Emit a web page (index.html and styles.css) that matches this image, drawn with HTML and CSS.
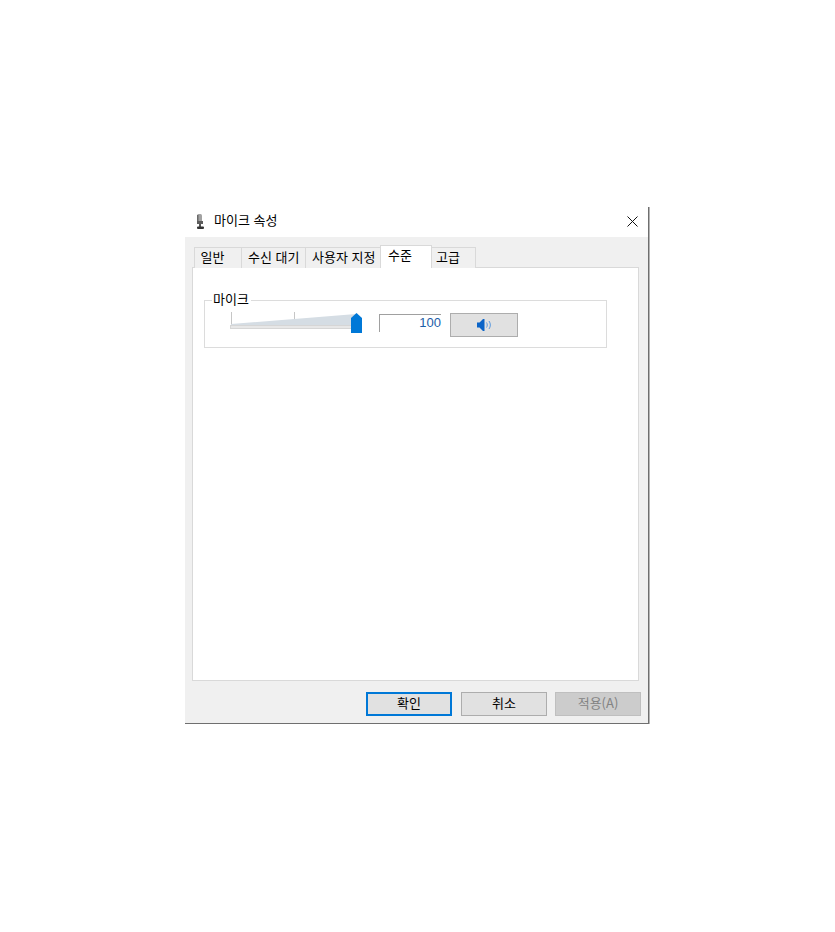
FILE: index.html
```html
<!DOCTYPE html>
<html lang="ko">
<head>
<meta charset="utf-8">
<title>마이크 속성</title>
<link rel="stylesheet" href="styles.css">
</head>
<body>
<div class="dialog">
  <div class="titlebar">
    <svg class="app-icon" width="12" height="16" viewBox="0 0 12 16">
      <rect x="3" y="0" width="5" height="9" rx="1.500" fill="#a2a2a2"/>
      <rect x="3" y="1" width="1.500" height="8" fill="#6a6a6a"/>
      <rect x="3" y="7" width="6" height="3" fill="#5c5c5c"/>
      <rect x="5" y="10" width="2" height="3" fill="#555"/>
      <rect x="3" y="12.500" width="7" height="2.500" rx="1" fill="#333"/>
    </svg>
    <span class="title">마이크 속성</span>
    <svg class="close" width="11" height="11" viewBox="0 0 11 11"><path d="M.5.5l10 10M10.500.5l-10 10" stroke="#111" stroke-width="1" fill="none"/></svg>
  </div>
  <div class="body">
    <div class="tabs">
      <div class="tab tab-general">일반</div>
      <div class="tab tab-listen">수신 대기</div>
      <div class="tab tab-custom">사용자 지정</div>
      <div class="tab tab-active">수준</div>
      <div class="tab tab-advanced">고급</div>
    </div>
    <div class="panel">
      <div class="group">
        <span class="legend">마이크</span>
        <div class="slider">
          <svg class="slider-art" width="132" height="22" viewBox="0 0 132 22">
            <path d="M1.500 0v12M64.500 0v12" stroke="#c6c6c6" fill="none"/>
            <path d="M1 12L126 2v11H1z" fill="#d5dde4"/>
            <rect x="0.500" y="13.500" width="126" height="3" fill="#e7e7e7" stroke="#d6d6d6"/>
            <path d="M126.500 1l5.500 5v15h-11V6z" fill="#0078d7"/>
          </svg>
        </div>
        <div class="value">100</div>
        <div class="speaker">
          <svg width="15" height="12" viewBox="0 0 15 12">
            <path d="M0 3.500h2.500L6 0h1.500v12H6L2.500 8.500H0z" fill="#0a64c8"/>
            <path d="M9.500 3.500c1 1.500 1 3.500 0 5M12 2c1.800 2.500 1.800 5.500 0 8" stroke="#5a9adf" fill="none"/>
          </svg>
        </div>
      </div>
    </div>
    <div class="footer">
      <div class="btn btn-default">확인</div>
      <div class="btn btn-cancel">취소</div>
      <div class="btn btn-disabled">적용(A)</div>
    </div>
  </div>
</div>
</body>
</html>
```

FILE: styles.css
```css
html, body {
  margin: 0;
  padding: 0;
  background: #fff;
}
body {
  font-family: "Noto Sans CJK KR", "Noto Sans", sans-serif;
  font-size: 13px;
  color: #000;
}
.dialog {
  box-sizing: border-box;
  width: 464px;
  height: 517px;
  margin: 207px 0 0 185px;
  background: #fff;
  border-right: 1px solid #6f6f6f;
  border-bottom: 1px solid #6f6f6f;
  box-shadow: 1px 0 0 #b5b5b5, 0 2px 0 #b5b5b5;
  display: flex;
  flex-direction: column;
}
.titlebar {
  height: 30px;
  flex: none;
  display: flex;
  align-items: center;
  padding: 0 10px 0 9px;
}
.app-icon { flex: none; margin-right: 8px; }
.title { flex: 1; line-height: 16px; position: relative; top: -2px; }
.close { flex: none; margin-top: -1px; }
.body {
  flex: 1;
  background: #f0f0f0;
  display: flex;
  flex-direction: column;
  padding: 8px 9px 0 7px;
}
.tabs {
  display: flex;
  align-items: flex-end;
  height: 23px;
  padding-left: 2px;
  margin-bottom: -1px;
  position: relative;
  z-index: 1;
}
.tab {
  box-sizing: border-box;
  height: 21px;
  border: 1px solid #d9d9d9;
  border-bottom: none;
  border-left: none;
  background: #f0f0f0;
  padding-left: 6px;
  line-height: 18px;
  white-space: nowrap;
}
.tab-general { width: 48px; border-left: 1px solid #d9d9d9; padding-left: 5.500px; }
.tab-listen { width: 64px; }
.tab-custom { width: 75px; }
.tab-active {
  width: 52px;
  height: 23px;
  background: #fff;
  border-left: 1px solid #d9d9d9;
  margin-left: -1px;
  padding-left: 7px;
}
.tab-advanced { width: 44px; padding-left: 4px; }
.panel {
  flex: none;
  box-sizing: border-box;
  height: 414px;
  width: 447px;
  background: #fff;
  border: 1px solid #d9d9d9;
  padding: 32px 31px 0 11px;
}
.group {
  box-sizing: border-box;
  position: relative;
  height: 48px;
  border: 1px solid #dcdcdc;
  display: flex;
  align-items: flex-start;
  padding: 11px 0 0 25px;
}
.legend {
  position: absolute;
  left: 7px;
  top: -10px;
  padding: 0 2px 0 1px;
  line-height: 16px;
  background: #fff;
}
.slider { width: 149px; flex: none; height: 22px; }
.slider-art { display: block; }
.value {
  box-sizing: border-box;
  flex: none;
  width: 62px;
  height: 18px;
  margin-top: 2px;
  border-top: 1px solid #a0a0a0;
  border-left: 1px solid #a0a0a0;
  font-family: "Liberation Sans", sans-serif;
  text-align: right;
  line-height: 15px;
  color: #1c5ea8;
}
.speaker {
  box-sizing: border-box;
  flex: none;
  width: 68px;
  height: 24px;
  margin: 1px 0 0 9px;
  background: #e1e1e1;
  border: 1px solid #adadad;
  display: flex;
  align-items: center;
  justify-content: center;
}
.footer {
  display: flex;
  justify-content: flex-end;
  padding: 11px 0 0;
  margin-right: -2px;
}
.btn {
  box-sizing: border-box;
  width: 86px;
  height: 24px;
  background: #e1e1e1;
  border: 1px solid #adadad;
  text-align: center;
  line-height: 20px;
}
.btn-default { border: 2px solid #0078d7; line-height: 18px; }
.btn-cancel { margin: 0 8px 0 9px; }
.btn-disabled { background: #cccccc; border-color: #bfbfbf; color: #838383; }
```
